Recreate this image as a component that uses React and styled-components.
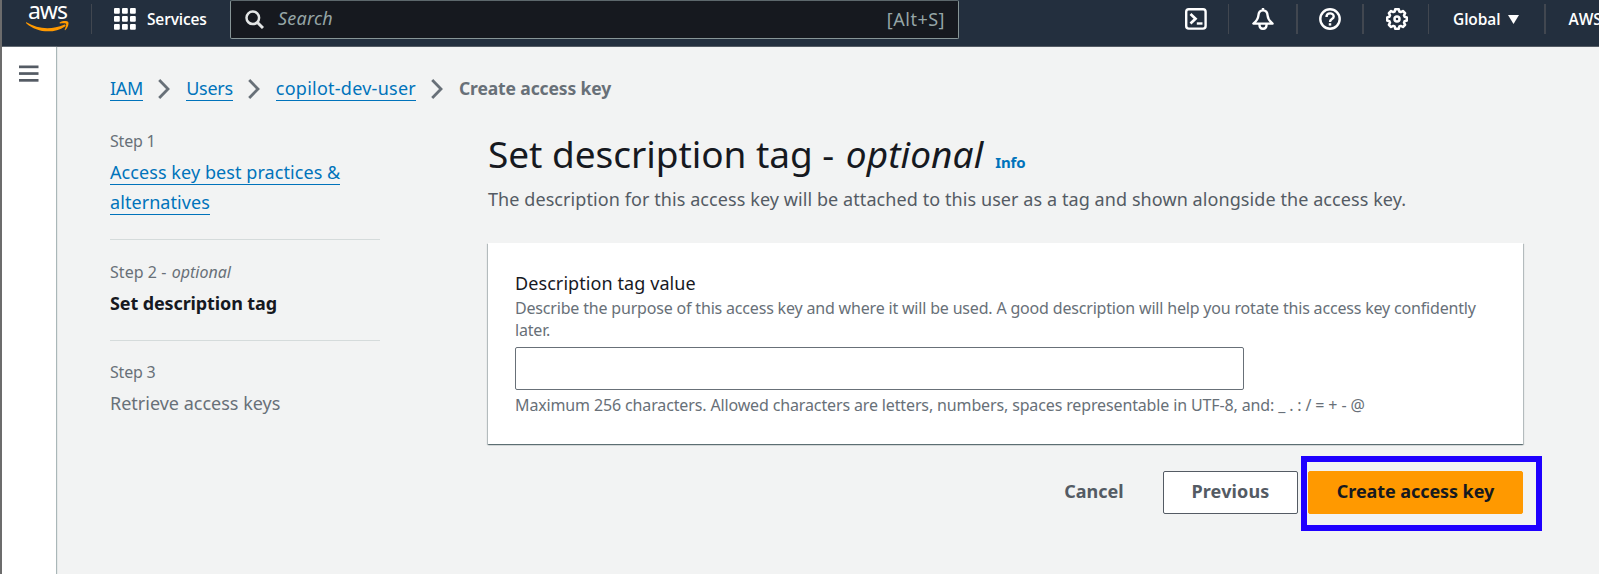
import React from 'react';
import styled, { createGlobalStyle } from 'styled-components';

const GlobalStyle = createGlobalStyle`
  *, *::before, *::after { box-sizing: border-box; }
  body {
    margin: 0;
    background: #f2f3f3;
    color: #16191f;
    font-family: 'Noto Sans', 'Open Sans', sans-serif;
    font-size: 18px;
    overflow: hidden;
  }
`;

const Window = styled.div`
  display: flex;
  flex-direction: column;
  height: 574px;
  border-left: 2px solid #6c6c6c;
  overflow: hidden;
`;

const TopBar = styled.header`
  display: flex;
  flex: none;
  height: 47px;
  padding-left: 23px;
  background: #232f3e;
  border-bottom: 1px solid #545b64;
  color: #fff;
`;

const Logo = styled.a`
  display: flex;
  flex-direction: column;
  align-items: center;
  width: 45px;
  height: 38px;
`;

const LogoText = styled.span`
  height: 21px;
  font-size: 23px;
  line-height: 21px;
  letter-spacing: -0.95px;
  color: #fff;
`;

const Divider = styled.span`
  flex: none;
  width: ${(p) => (p.$wide ? 2 : 1)}px;
  height: 30px;
  margin: 4px ${(p) => p.$after}px 0 ${(p) => p.$before}px;
  background: #414750;
`;

const NavButton = styled.button`
  display: flex;
  flex: none;
  align-items: center;
  gap: ${(p) => p.$gap || 0}px;
  height: 38px;
  padding: 0;
  border: 0;
  background: none;
  color: #fff;
  font: 600 15.5px/22px 'Open Sans', 'Noto Sans', sans-serif;
  letter-spacing: ${(p) => p.$spacing || 0}px;
  white-space: nowrap;
`;

const SearchBox = styled.label`
  display: flex;
  flex: none;
  align-items: center;
  width: 729px;
  height: 39px;
  padding: 0 13px 0 14px;
  background: #16191f;
  border: 1px solid #879596;
  border-top-color: #5d686c;
  border-radius: 2px;
  color: #95a5a6;
`;

const SearchHint = styled.em`
  flex: 1;
  margin-left: 14px;
  padding-bottom: 3px;
  letter-spacing: 0.2px;
  line-height: 30px;
`;

const Shortcut = styled.span`
  padding-bottom: 2px;
  letter-spacing: 0.5px;
  line-height: 30px;
`;

const Services = styled.div`
  display: flex;
  flex: none;
  width: 116px;
`;

const Utilities = styled.nav`
  display: flex;
  flex: none;
  margin-left: 226px;
`;

const Body = styled.div`
  display: flex;
  flex: 1;
`;

const SideRail = styled.aside`
  position: relative;
  width: 54px;
  padding: 16px 0 0 17px;
  background: #fff;
  box-shadow: 1px 0 1px #aab7b8;
`;

const Content = styled.main`
  flex: 1;
  padding: 26px 76px 0 54px;
`;

const Breadcrumbs = styled.nav`
  display: flex;
  align-items: center;
  height: 30px;
  line-height: 30px;
`;

const Crumb = styled.span`
  flex: none;
`;

const Link = styled.a`
  color: #0073bb;
  border-bottom: 1px solid #0073bb;
  letter-spacing: ${(p) => p.$spacing || 0}px;
`;

const CurrentCrumb = styled(Crumb)`
  color: #687078;
  font-weight: 700;
  font-size: 17.5px;
  letter-spacing: -0.13px;
`;

const Columns = styled.div`
  display: grid;
  grid-template-columns: 270px 1035px;
  column-gap: 108px;
  margin-top: 27px;
`;

const Steps = styled.ol`
  margin: 0;
  padding: 0;
  list-style: none;
`;

const Step = styled.li`
  padding-bottom: 22px;
  margin-bottom: ${(p) => p.$gap || 0}px;
  border-bottom: ${(p) => (p.$gap ? 1 : 0)}px solid #d5dbdb;
`;

const StepLabel = styled.div`
  margin-bottom: 5px;
  color: #687078;
  font-size: 16px;
  line-height: 22px;
  letter-spacing: ${(p) => p.$spacing ?? -0.2}px;
`;

const Optional = styled.em`
  margin-left: ${(p) => p.$indent}px;
  letter-spacing: ${(p) => p.$spacing || 0}px;
`;

const StepTitle = styled.div`
  line-height: 30px;
  color: ${(p) => (p.$active ? '#16191f' : '#687078')};
  font-weight: ${(p) => (p.$active ? 700 : 400)};
  letter-spacing: ${(p) => (p.$active ? -0.12 : 0)}px;
`;

const Title = styled.h1`
  height: 47px;
  margin: 0;
  padding-top: 1px;
  font-size: 37px;
  font-weight: 400;
  line-height: 46px;
  letter-spacing: -0.04px;
  white-space: nowrap;
`;

const InfoLink = styled.a`
  margin-left: 12px;
  color: #0073bb;
  font-size: 15px;
  font-weight: 700;
  line-height: 1;
  letter-spacing: -0.15px;
`;

const Lead = styled.p`
  margin: 7px 0 29px;
  color: #545b64;
  line-height: 30px;
  letter-spacing: 0.08px;
  white-space: nowrap;
`;

const Card = styled.section`
  display: flex;
  flex-direction: column;
  height: 201px;
  padding: 26px 27px 0;
  background: #fff;
  box-shadow: 0 1px 1px 0 rgba(0, 28, 36, 0.4), 1px 1px 1px 0 rgba(0, 28, 36, 0.2),
    -1px 1px 1px 0 rgba(0, 28, 36, 0.2);
`;

const FieldLabel = styled.label`
  line-height: 28px;
  letter-spacing: 0.08px;
`;

const HelpText = styled.div`
  color: #687078;
  font-size: 16px;
  line-height: 22px;
  letter-spacing: ${(p) => p.$spacing}px;
`;

const TextInput = styled.input`
  width: 729px;
  height: 43px;
  margin: 6px 0 4px;
  padding: 0 12px;
  border: 1px solid #687078;
  border-radius: 2px;
  background: #fff;
  outline: none;
`;

const Actions = styled.div`
  display: flex;
  gap: 10px;
  justify-content: flex-end;
  margin-top: 27px;
`;

const Button = styled.button`
  width: ${(p) => p.$width}px;
  height: 43px;
  padding: 0 0 3px;
  border: 1px solid ${(p) => (p.$kind === 'normal' ? '#545b64' : 'transparent')};
  border-radius: 2px;
  background: ${(p) => (p.$kind === 'normal' ? '#fff' : 'none')};
  color: #545b64;
  font: 700 18px/28px 'Noto Sans', sans-serif;
  letter-spacing: ${(p) => p.$spacing || 0}px;
  white-space: nowrap;
`;

const PrimaryButton = styled(Button)`
  border-color: #ff9900;
  background: #ff9900;
  color: #16191f;
`;

const Highlighted = styled.div`
  position: relative;
`;

const HighlightFrame = styled.span`
  position: absolute;
  inset: -15px -19px -17px -7px;
  border: 6px solid #1f00ff;
  pointer-events: none;
`;

const Chevron = styled.svg`
  flex: none;
  margin: 2px 16px 0 15px;
`;

const Separator = () => (
  <Chevron width="12" height="20" viewBox="0 0 12 20" fill="none" stroke="#687078" strokeWidth="2.8">
    <path d="M1.2 1 L10 10 L1.2 19" />
  </Chevron>
);

const SmileIcon = () => (
  <svg width="45" height="11" viewBox="0 0 45 11" fill="#ff9900">
    <path d="M1.4 1.3 C13 8.6 27.5 8.8 39 3.7 C40.3 3.2 41.3 4.5 40 5.4 C29 12.8 12 12 1.2 2.2 C.7 1.7 1 1.1 1.4 1.3Z" />
    <path d="M34.7 1.5 C37.5 -.4 42.3 -.1 43.2 .9 C44.1 2 43 6.8 40.4 9 C39.9 9.4 39.5 9.1 39.7 8.6 C40.4 6.9 41.6 3.6 41 2.8 C40.4 2 37 2.2 35.2 2.4 C34.5 2.4 34.3 1.9 34.7 1.5Z" />
  </svg>
);

const GridIcon = () => (
  <svg width="22" height="22" viewBox="0 0 22 22" fill="#fff">
    {[0, 8, 16].map((y) =>
      [0, 8, 16].map((x) => <rect key={`${x}-${y}`} x={x} y={y} width="5.8" height="5.8" rx="1" />)
    )}
  </svg>
);

const SearchIcon = () => (
  <svg width="19" height="19" viewBox="0 0 19 19" fill="none" stroke="#e3e6e6" strokeWidth="2.5">
    <circle cx="7.8" cy="7.8" r="6.3" />
    <path d="M12.2 12.2 L18 18" strokeWidth="3" />
  </svg>
);

const ShellIcon = () => (
  <svg width="22" height="22" viewBox="0 0 22 22" fill="none" stroke="#fff" strokeWidth="2.4">
    <rect x="1.2" y="1.2" width="19.4" height="19.4" rx="2.6" />
    <path d="M5.5 6 L10.5 10.7 L5.5 15.4" strokeWidth="2.7" />
    <path d="M11.8 15.5 H17.5" />
  </svg>
);

const BellIcon = () => (
  <svg width="22" height="22" viewBox="0 0 22 22" fill="none" stroke="#fff" strokeWidth="2.4" strokeLinejoin="round">
    <path d="M11 0 V3" />
    <path d="M11 2.4 C8 2.4 6.6 4.6 6.4 7.5 C6.1 11.4 4.6 13 1.4 15.6 H20.6 C17.4 13 15.9 11.4 15.6 7.5 C15.4 4.6 14 2.4 11 2.4Z" />
    <path d="M7.4 16 C7.4 22.4 14.6 22.4 14.6 16" />
  </svg>
);

const HelpIcon = () => (
  <svg width="22" height="22" viewBox="0 0 22 22" fill="none" stroke="#fff" strokeWidth="2.4">
    <circle cx="11" cy="11" r="9.7" />
    <path d="M7.5 8.9 C7.5 4.2 14.7 4.3 14.7 8.5 C14.7 11.3 11 10.8 11 13.9" />
    <path d="M11 15.2 V17.6" strokeWidth="2.5" />
  </svg>
);

const GearIcon = () => (
  <svg width="22" height="22" viewBox="0 0 22 22" fill="none" stroke="#fff" strokeWidth="2.5" strokeLinejoin="round">
    <path d="M9.3 1.2 H12.7 L13.4 3.6 L14.7 4.1 L16.9 3 L19.1 5.2 L18 7.3 L18.5 8.7 L20.8 9.4 V12.6 L18.5 13.3 L18 14.7 L19.1 16.8 L16.9 19 L14.7 17.9 L13.4 18.4 L12.7 20.8 H9.3 L8.6 18.4 L7.3 17.9 L5.1 19 L2.9 16.8 L4 14.7 L3.5 13.3 L1.2 12.6 V9.4 L3.5 8.7 L4 7.3 L2.9 5.2 L5.1 3 L7.3 4.1 L8.6 3.6Z" />
    <circle cx="11" cy="11" r="2.5" />
  </svg>
);

const CaretIcon = () => (
  <svg width="11" height="9" viewBox="0 0 11 9" fill="#fff">
    <path d="M0 0 H11 L5.5 9Z" />
  </svg>
);

const MenuIcon = () => (
  <svg width="20" height="17" viewBox="0 0 20 17" fill="#545b64">
    <rect y="0.5" width="19.5" height="2.7" />
    <rect y="7.2" width="19.5" height="2.7" />
    <rect y="14" width="19.5" height="2.7" />
  </svg>
);

export default function App() {
  return (
    <Window>
      <GlobalStyle />
      <TopBar>
        <Logo>
          <LogoText>aws</LogoText>
          <SmileIcon />
        </Logo>
        <Divider $before={21} $after={22} />
        <Services>
          <NavButton $gap={11} $spacing={-0.15}>
            <GridIcon />
            Services
          </NavButton>
        </Services>
        <SearchBox>
          <SearchIcon />
          <SearchHint>Search</SearchHint>
          <Shortcut>[Alt+S]</Shortcut>
        </SearchBox>
        <Utilities>
          <NavButton><ShellIcon /></NavButton>
          <Divider $before={21} $after={23} />
          <NavButton><BellIcon /></NavButton>
          <Divider $wide $before={22} $after={21} />
          <NavButton><HelpIcon /></NavButton>
          <Divider $wide $before={21} $after={22} />
          <NavButton><GearIcon /></NavButton>
          <Divider $before={20} $after={24} />
          <NavButton $gap={8} $spacing={-0.1}>
            Global
            <CaretIcon />
          </NavButton>
          <Divider $wide $before={25} $after={22} />
          <NavButton>AWS</NavButton>
        </Utilities>
      </TopBar>
      <Body>
        <SideRail>
          <MenuIcon />
        </SideRail>
        <Content>
          <Breadcrumbs>
            <Crumb><Link $spacing={-0.25}>IAM</Link></Crumb>
            <Separator />
            <Crumb><Link $spacing={-0.28}>Users</Link></Crumb>
            <Separator />
            <Crumb><Link $spacing={0.25}>copilot-dev-user</Link></Crumb>
            <Separator />
            <CurrentCrumb>Create access key</CurrentCrumb>
          </Breadcrumbs>
          <Columns>
            <Steps>
              <Step $gap={21}>
                <StepLabel>Step 1</StepLabel>
                <StepTitle>
                  <Link $spacing={0.07}>Access key best practices &amp; alternatives</Link>
                </StepTitle>
              </Step>
              <Step $gap={20}>
                <StepLabel $spacing={0.05}>
                  Step 2 - <Optional $indent={1}>optional</Optional>
                </StepLabel>
                <StepTitle $active>Set description tag</StepTitle>
              </Step>
              <Step>
                <StepLabel>Step 3</StepLabel>
                <StepTitle>Retrieve access keys</StepTitle>
              </Step>
            </Steps>
            <div>
              <Title>
                Set description tag - <Optional $indent={2} $spacing={0.08}>optional</Optional>
                <InfoLink>Info</InfoLink>
              </Title>
              <Lead>
                The description for this access key will be attached to this user as a tag and shown alongside the
                access key.
              </Lead>
              <Card>
                <FieldLabel htmlFor="tag-value">Description tag value</FieldLabel>
                <HelpText $spacing={-0.182}>
                  Describe the purpose of this access key and where it will be used. A good description will help you
                  rotate this access key confidently later.
                </HelpText>
                <TextInput id="tag-value" />
                <HelpText $spacing={-0.137}>
                  Maximum 256 characters. Allowed characters are letters, numbers, spaces representable in UTF-8, and: _
                  . : / = + - @
                </HelpText>
              </Card>
              <Actions>
                <Button $width={118}>Cancel</Button>
                <Button $kind="normal" $width={135} $spacing={0.15}>Previous</Button>
                <Highlighted>
                  <PrimaryButton $width={215} $spacing={-0.08}>Create access key</PrimaryButton>
                  <HighlightFrame />
                </Highlighted>
              </Actions>
            </div>
          </Columns>
        </Content>
      </Body>
    </Window>
  );
}
